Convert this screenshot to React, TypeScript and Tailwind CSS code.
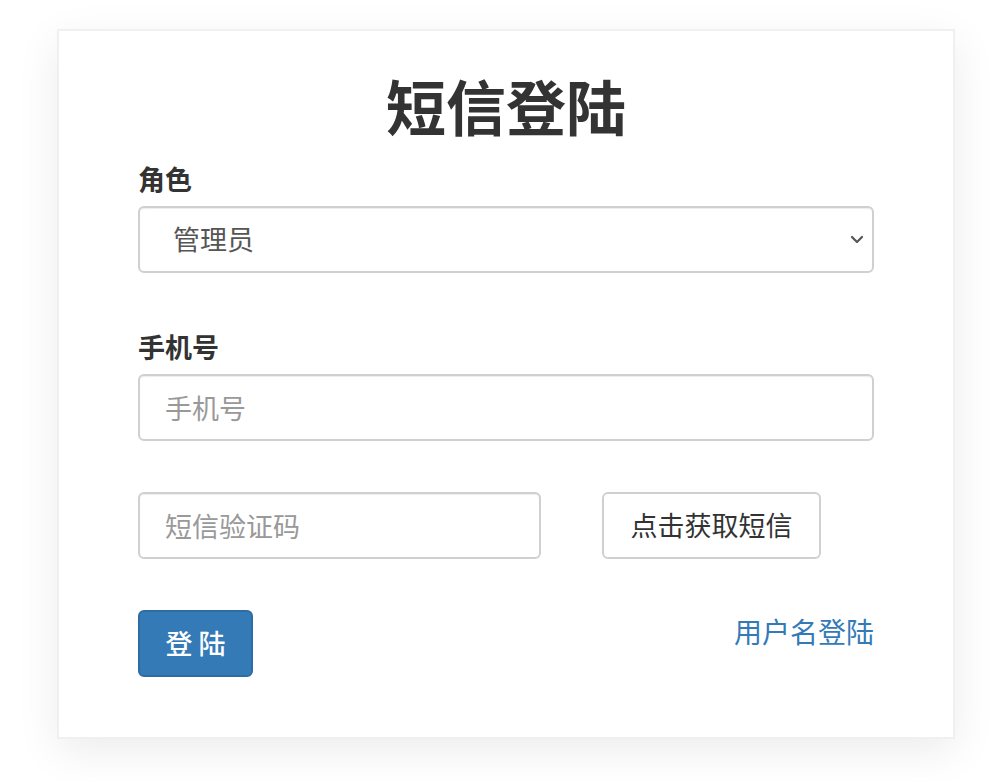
import React, { useState } from 'react';

const App: React.FC = () => {
    const [role, setRole] = useState('admin');
    const [phone, setPhone] = useState('');
    const [code, setCode] = useState('');

    const inputCls =
        'block h-[67px] rounded-[6px] border-2 border-[#d0d0d0] bg-white px-[25px] text-[27px] text-[#555] placeholder:text-[#999] shadow-[inset_0_1px_1px_rgba(0,0,0,0.075)] outline-none';

    return (
        <div className="min-h-[782px] bg-white pt-[29px] pl-[57px] font-['Noto_Sans_CJK_SC',sans-serif]">
            <div className="w-[898px] h-[710px] border-2 border-[#f0f0f0] bg-white px-[79px] pt-[41px] shadow-[0_12px_40px_rgba(0,0,0,0.08)]">
                <h1 className="text-center text-[60px] leading-[66px] font-bold text-[#333]">短信登陆</h1>

                <label className="mt-[21px] block text-[27px] leading-[40px] font-bold text-[#333]">角色</label>
                <div className="relative mt-[7px]">
                    <select
                        value={role}
                        onChange={(e) => setRole(e.target.value)}
                        className={`${inputCls} w-full appearance-none pl-[33px]`}
                    >
                        <option value="admin">管理员</option>
                        <option value="user">用户</option>
                    </select>
                    <svg className="pointer-events-none absolute right-[10px] top-[29px] h-[10px] w-[14px]" viewBox="0 0 14 10" fill="none">
                        <path d="M2 2l5 5 5-5" stroke="#555" strokeWidth="2.2" strokeLinecap="round" strokeLinejoin="round" />
                    </svg>
                </div>

                <label className="mt-[54px] block text-[27px] leading-[40px] font-bold text-[#333]">手机号</label>
                <input
                    type="text"
                    value={phone}
                    onChange={(e) => setPhone(e.target.value)}
                    placeholder="手机号"
                    className={`${inputCls} mt-[7px] w-full`}
                />

                <div className="mt-[51px] flex items-center gap-[61px]">
                    <input
                        type="text"
                        value={code}
                        onChange={(e) => setCode(e.target.value)}
                        placeholder="短信验证码"
                        className={`${inputCls} w-[403px]`}
                    />
                    <button className="h-[67px] w-[219px] rounded-[6px] border-2 border-[#d0d0d0] bg-white text-[27px] text-[#333]">
                        点击获取短信
                    </button>
                </div>

                <div className="mt-[51px] flex items-start justify-between">
                    <button className="h-[67px] w-[115px] rounded-[6px] border-2 border-[#2e6da4] bg-[#337ab7] text-[27px] font-medium text-white">
                        登 陆
                    </button>
                    <a href="#" className="mt-[1px] text-[28px] leading-[40px] text-[#337ab7]">用户名登陆</a>
                </div>
            </div>
        </div>
    );
};

export default App;
